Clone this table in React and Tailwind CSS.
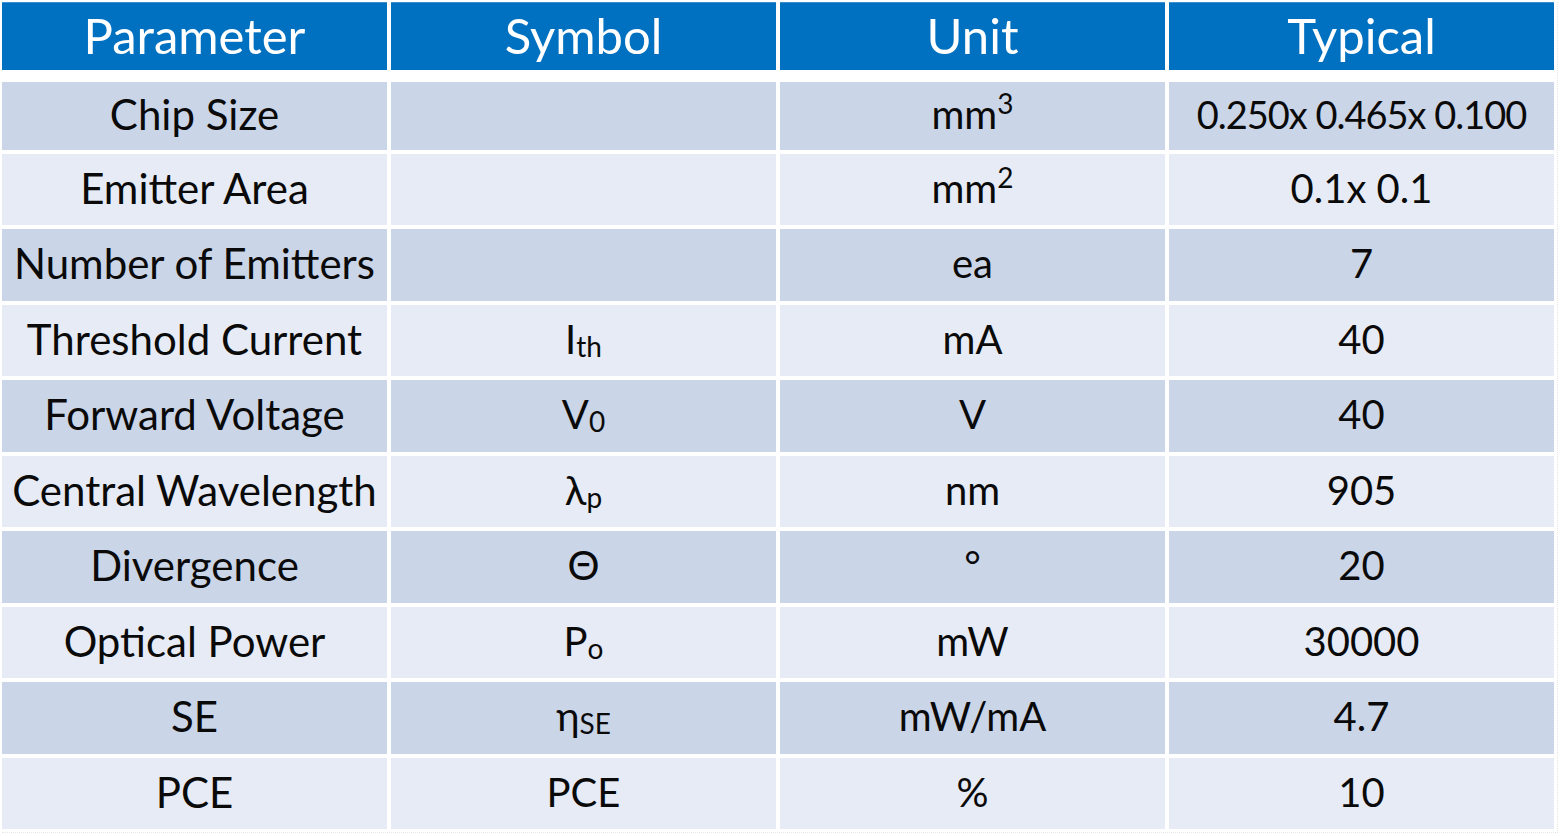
import React from 'react'

const font = { fontFamily: "Lato, 'DejaVu Sans', 'Liberation Sans', sans-serif" }

const Sub = ({ children }) => (
  <span className="relative top-[7px] text-[28px] leading-none">{children}</span>
)

const Sup = ({ children }) => (
  <span className="relative -top-[11px] text-[28px] leading-none">{children}</span>
)

const rows = [
  { param: 'Chip Size', symbol: '', unit: <>mm<Sup>3</Sup></>, typical: '0.250x 0.465x 0.100', small: true },
  { param: 'Emitter Area', symbol: '', unit: <>mm<Sup>2</Sup></>, typical: '0.1x 0.1' },
  { param: 'Number of Emitters', symbol: '', unit: 'ea', typical: '7' },
  { param: 'Threshold Current', symbol: <>I<Sub>th</Sub></>, unit: 'mA', typical: '40' },
  { param: 'Forward Voltage', symbol: <>V<Sub>0</Sub></>, unit: 'V', typical: '40' },
  { param: 'Central Wavelength', symbol: <>λ<Sub>p</Sub></>, unit: 'nm', typical: '905' },
  { param: 'Divergence', symbol: 'Θ', unit: '°', typical: '20' },
  { param: 'Optical Power', symbol: <>P<Sub>o</Sub></>, unit: 'mW', typical: '30000' },
  { param: 'SE', symbol: <>η<Sub>SE</Sub></>, unit: 'mW/mA', typical: '4.7' },
  { param: 'PCE', symbol: 'PCE', unit: '%', typical: '10' },
]

export default function App() {
  return (
    <div className="w-[1562px] h-[836px] bg-white pl-[2px] pt-[2px]" style={font}>
      <div className="w-[1556px] h-[831px] border-r border-b border-dotted border-[#e6e6e6]">
        {/* Шапка таблицы */}
        <div className="grid grid-cols-[385px_385px_385px_385px] grid-rows-[68px] gap-x-[4px] h-[68px]">
          {['Parameter', 'Symbol', 'Unit', 'Typical'].map((h) => (
            <div
              key={h}
              className="bg-[#0070c0] border-t border-[#3d8fd0] flex items-center justify-center text-white text-[49px] leading-none pb-[2px]"
            >
              {h}
            </div>
          ))}
        </div>

        {/* Строки */}
        <div className="mt-[11.5px] flex flex-col gap-[4px]">
          {rows.map((r, i) => {
            const bg = i % 2 === 0 ? 'bg-[#cad5e8]' : 'bg-[#e7ebf5]'
            const h = i === 0 ? 'h-[68px]' : 'h-[71.5px]'
            return (
              <div key={r.param} className={`grid grid-cols-[385px_385px_385px_385px] gap-x-[4px] ${h}`}>
                <div className={`${bg} flex items-center justify-center text-[42px] leading-none text-[#0a0a0a] pb-[3px] whitespace-nowrap`}>
                  {r.param}
                </div>
                <div className={`${bg} flex items-center justify-center text-[40px] leading-none text-[#0a0a0a] pb-[3px] whitespace-nowrap`}>
                  {r.symbol}
                </div>
                <div className={`${bg} flex items-center justify-center text-[40px] leading-none text-[#0a0a0a] pb-[3px] whitespace-nowrap`}>
                  {r.unit}
                </div>
                <div
                  className={`${bg} flex items-center justify-center leading-none text-[#0a0a0a] pb-[3px] whitespace-nowrap ${
                    r.small ? 'text-[38px] tracking-[-1px]' : 'text-[40px]'
                  }`}
                >
                  {r.typical}
                </div>
              </div>
            )
          })}
        </div>
      </div>
    </div>
  )
}
